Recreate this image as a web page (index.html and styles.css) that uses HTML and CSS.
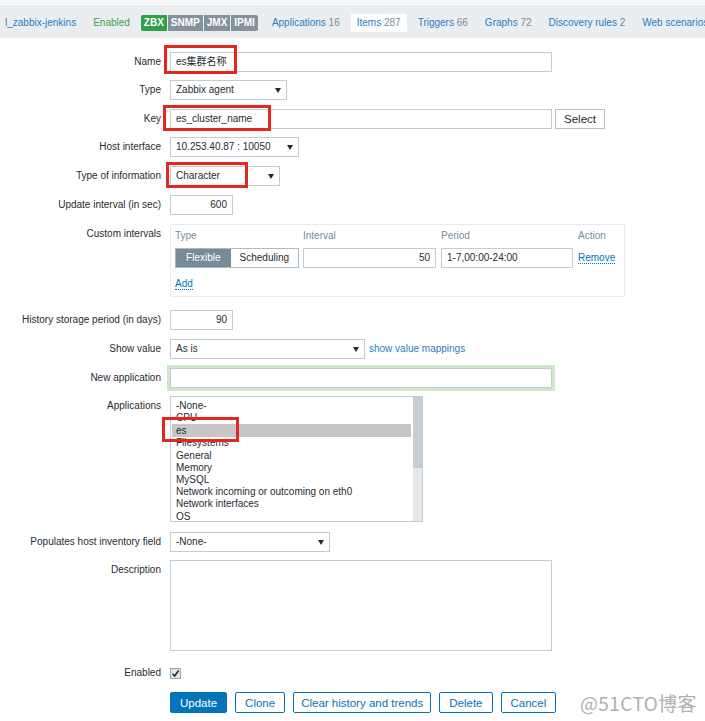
FILE: index.html
```html
<!DOCTYPE html>
<html>
<head>
<meta charset="utf-8">
<link rel="stylesheet" href="styles.css">
</head>
<body>
<header class="topbar">
  <nav class="nav">
    <a class="nav-item first link">l_zabbix-jenkins</a>
    <span class="nav-item status">Enabled</span>
    <span class="badges"><span class="badge green">ZBX</span><span class="badge gray">SNMP</span><span class="badge gray">JMX</span><span class="badge gray">IPMI</span></span>
    <a class="nav-item link">Applications <span class="count">16</span></a>
    <a class="nav-item link active">Items <span class="count">287</span></a>
    <a class="nav-item link">Triggers <span class="count">66</span></a>
    <a class="nav-item link">Graphs <span class="count">72</span></a>
    <a class="nav-item link">Discovery rules <span class="count">2</span></a>
    <a class="nav-item link">Web scenarios</a>
  </nav>
</header>

<main class="form">
  <div class="row mb8">
    <div class="lbl">Name</div>
    <div class="field input w-wide">es集群名称</div>
  </div>
  <div class="row mb9">
    <div class="lbl">Type</div>
    <div class="field select w-type"><span>Zabbix agent</span><i class="arrow"></i></div>
  </div>
  <div class="row mb8">
    <div class="lbl">Key</div>
    <div class="field input w-wide">es_cluster_name</div>
    <button class="btn-select">Select</button>
  </div>
  <div class="row mb9">
    <div class="lbl">Host interface</div>
    <div class="field select w-host"><span>10.253.40.87 : 10050</span><i class="arrow"></i></div>
  </div>
  <div class="row mb9">
    <div class="lbl">Type of information</div>
    <div class="field select w-info"><span>Character</span><i class="arrow"></i></div>
  </div>
  <div class="row mb9">
    <div class="lbl">Update interval (in sec)</div>
    <div class="field input num w-num">600</div>
  </div>
  <div class="row mb13">
    <div class="lbl">Custom intervals</div>
    <div class="intervals">
      <div class="int-grid">
        <div class="int-head">Type</div>
        <div class="int-head">Interval</div>
        <div class="int-head">Period</div>
        <div class="int-head">Action</div>
        <div class="segment"><span class="seg on">Flexible</span><span class="seg">Scheduling</span></div>
        <div class="field input num w-int">50</div>
        <div class="field input w-per">1-7,00:00-24:00</div>
        <a class="dlink">Remove</a>
      </div>
      <a class="dlink add">Add</a>
    </div>
  </div>
  <div class="row mb9">
    <div class="lbl">History storage period (in days)</div>
    <div class="field input num w-num">90</div>
  </div>
  <div class="row mb9">
    <div class="lbl">Show value</div>
    <div class="field select w-show"><span>As is</span><i class="arrow"></i></div>
    <a class="plain-link">show value mappings</a>
  </div>
  <div class="row mb8">
    <div class="lbl">New application</div>
    <div class="field input w-wide focus"></div>
  </div>
  <div class="row mb10">
    <div class="lbl">Applications</div>
    <div class="listbox">
      <ul class="options">
        <li>-None-</li>
        <li>CPU</li>
        <li class="sel">es</li>
        <li>Filesystems</li>
        <li>General</li>
        <li>Memory</li>
        <li>MySQL</li>
        <li>Network incoming or outcoming on eth0</li>
        <li>Network interfaces</li>
        <li>OS</li>
      </ul>
      <div class="scroll"><div class="thumb"></div></div>
    </div>
  </div>
  <div class="row mb8">
    <div class="lbl">Populates host inventory field</div>
    <div class="field select w-pop"><span>-None-</span><i class="arrow"></i></div>
  </div>
  <div class="row mb12">
    <div class="lbl">Description</div>
    <div class="field textarea w-wide"></div>
  </div>
  <div class="row mb9">
    <div class="lbl">Enabled</div>
    <span class="checkbox"><svg width="9" height="9" viewBox="0 0 9 9"><path d="M1.5 4.8 L3.6 7 L7.6 1.6" fill="none" stroke="#1f2c33" stroke-width="1.6"/></svg></span>
  </div>
  <div class="row">
    <div class="lbl"></div>
    <div class="buttons">
      <button class="btn primary">Update</button>
      <button class="btn">Clone</button>
      <button class="btn tight">Clear history and trends</button>
      <button class="btn">Delete</button>
      <button class="btn">Cancel</button>
    </div>
  </div>
</main>

<div class="mark m-name"></div>
<div class="mark m-key"></div>
<div class="mark m-info"></div>
<div class="mark m-app"></div>
<div class="watermark">@51CTO博客</div>
</body>
</html>
```

FILE: styles.css
```css
* { box-sizing: border-box; }
html, body { margin: 0; padding: 0; }
body {
  font-family: "Liberation Sans", Arial, "Noto Sans CJK SC", sans-serif;
  font-size: 10px;
  color: #1f2c33;
  background: #ffffff;
  width: 705px;
  height: 721px;
  overflow: hidden;
  position: relative;
}

/* header */
.topbar {
  background: #ebeef0;
  border-top: 6px solid #f4f5f6;
}
.nav {
  border-top: 1px solid #e0e4e7;
  height: 32px;
  display: flex;
  align-items: center;
  gap: 5px;
  padding-left: 5px;
  white-space: nowrap;
  overflow: hidden;
}
.nav > * { flex: none; }
.nav-item {
  padding: 0 6px;
  line-height: 18px;
  height: 18px;
}
.nav-item.first { padding-left: 0; }
.link { color: #2a7dbf; }
.count { color: #768d99; }
.status { color: #429e47; }
.active { background: #ffffff; }
.badges {
  display: flex;
  gap: 1px;
  margin-right: 3px;
  border-radius: 2px;
  overflow: hidden;
}
.badge {
  flex: none;
  color: #ffffff;
  font-weight: bold;
  padding: 0 3px;
  height: 16px;
  line-height: 16px;
}
.badge.green { background: #2f9f4b; }
.badge.gray { background: #84939a; }

/* form */
.form { padding-top: 14px; }
.row { display: flex; align-items: flex-start; }
.mb8 { margin-bottom: 8px; }
.mb9 { margin-bottom: 9px; }
.mb10 { margin-bottom: 10px; }
.mb12 { margin-bottom: 12px; }
.mb13 { margin-bottom: 13px; }
.lbl {
  width: 170px;
  flex: none;
  padding-right: 9px;
  text-align: right;
  line-height: 20px;
  white-space: nowrap;
}
.field {
  height: 20px;
  border: 1px solid #c4ccd1;
  background: #fff;
  line-height: 18px;
  padding: 0 5px;
  white-space: nowrap;
  flex: none;
}
.num { text-align: right; }
.w-wide { width: 382px; }
.w-type { width: 117px; }
.w-host { width: 129px; }
.w-info { width: 110px; }
.w-num { width: 63px; }
.w-show { width: 195px; }
.w-pop { width: 160px; }
.w-int { width: 133px; }
.w-per { width: 132px; }
.select { display: flex; align-items: center; justify-content: space-between; }
.arrow {
  width: 0; height: 0;
  border-left: 3px solid transparent;
  border-right: 3px solid transparent;
  border-top: 5px solid #1f2c33;
}
.focus { box-shadow: 0 0 0 3px #cfe7cb; }
.textarea { height: 91px; }
.btn-select {
  margin-left: 3px;
  height: 20px;
  width: 50px;
  border: 1px solid #b6c1c7;
  background: #fff;
  font-family: inherit;
  font-size: 11.5px;
  color: #1f2c33;
  padding: 0;
}
.plain-link { color: #2a7dbf; margin-left: 4px; line-height: 20px; }

/* custom intervals */
.intervals {
  width: 455px;
  height: 73px;
  border: 1px solid #e8ebed;
  padding: 5px 4px 0;
}
.int-grid {
  display: grid;
  grid-template-columns: 128px 138px 137px auto;
  grid-template-rows: 12px 20px;
  row-gap: 6px;
  align-items: center;
}
.int-head { color: #768d99; line-height: 12px; }
.segment { display: flex; width: 124px; height: 20px; border: 1px solid #acbbc2; }
.seg { line-height: 18px; text-align: center; width: 68px; }
.seg.on { background: #768d99; color: #fff; width: 55px; }
.dlink {
  color: #0275b8;
  border-bottom: 1px dotted #0275b8;
  justify-self: start;
  line-height: 11px;
}
.add { display: inline-block; margin-top: 10px; }

/* listbox */
.listbox {
  width: 253px;
  height: 126px;
  border: 1px solid #c4ccd1;
  display: flex;
  justify-content: space-between;
  padding: 3px 0 0 1px;
  flex: none;
}
.options { list-style: none; margin: 0; padding: 0; width: 239px; }
.options li { line-height: 12.2px; padding-left: 4px; white-space: nowrap; }
.options li.sel { background: #c6c6c6; line-height: 13px; }
.scroll {
  width: 9px;
  height: 124px;
  margin-top: -3px;
  background: #e4e8ea;
}
.thumb { height: 71px; background: #c6ced3; }

/* checkbox */
.checkbox {
  margin-top: 5px;
  width: 11px; height: 11px;
  border: 1px solid #9aa3a8;
  background: #e2e4e6;
  display: flex; align-items: center; justify-content: center;
}

/* buttons */
.buttons { display: flex; gap: 8px; }
.btn {
  height: 21px;
  padding: 0 9px;
  font-family: inherit;
  font-size: 11.5px;
  color: #0275b8;
  background: #fff;
  border: 1px solid #0275b8;
  border-radius: 2px;
}
.btn.tight { padding: 0 7px; }
.btn.primary { background: #0275b8; color: #fff; }

/* annotation overlays */
.mark { position: absolute; border: 3px solid #e5261c; }
.m-name { left: 164px; top: 45px; width: 73px; height: 29px; }
.m-key { left: 163px; top: 105px; width: 108px; height: 26px; }
.m-info { left: 166px; top: 162px; width: 82px; height: 26px; }
.m-app { left: 162px; top: 417px; width: 77px; height: 25px; }
.watermark {
  position: absolute;
  left: 580px;
  top: 689px;
  font-family: "Noto Sans CJK SC", sans-serif;
  font-size: 19px;
  color: #b0b0b0;
  letter-spacing: 0.4px;
}
```
